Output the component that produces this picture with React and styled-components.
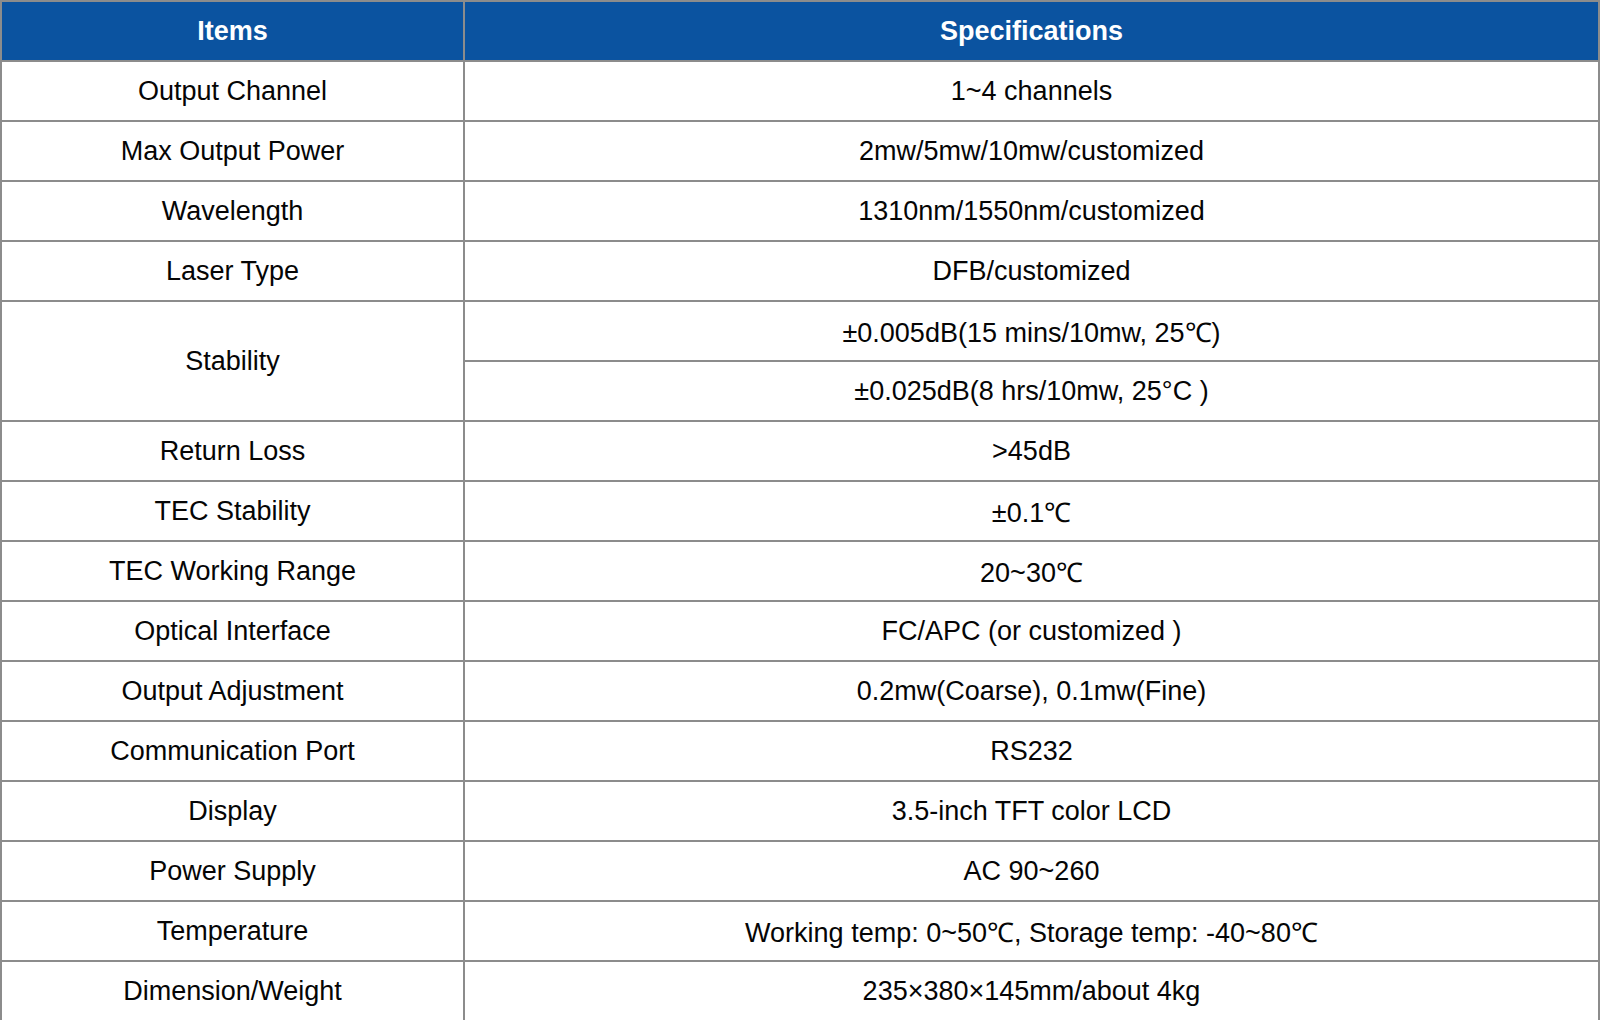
import React from 'react';
import styled, { createGlobalStyle } from 'styled-components';

const GlobalStyle = createGlobalStyle`
    html, body {
        margin: 0;
        padding: 0;
        background: #ffffff;
    }
    body {
        font-family: "Liberation Sans", Arial, sans-serif;
    }
`;

const SpecTable = styled.table`
    width: 1600px;
    border-collapse: collapse;
    table-layout: fixed;
    color: #050505;
`;

const HeadCell = styled.th`
    height: 58px;
    padding: 0;
    background: #0b53a0;
    color: #ffffff;
    font-size: 27px;
    font-weight: bold;
    text-align: center;
    border: 2px solid #8c8c8c;
`;

const Cell = styled.td`
    height: 58px;
    padding: 0;
    font-size: 27px;
    text-align: center;
    vertical-align: middle;
    border: 2px solid #8c8c8c;
`;

const rows = [
    ['Output Channel', '1~4 channels'],
    ['Max Output Power', '2mw/5mw/10mw/customized'],
    ['Wavelength', '1310nm/1550nm/customized'],
    ['Laser Type', 'DFB/customized'],
    ['Stability', ['±0.005dB(15 mins/10mw, 25℃)', '±0.025dB(8 hrs/10mw, 25°C )']],
    ['Return Loss', '>45dB'],
    ['TEC Stability', '±0.1℃'],
    ['TEC Working Range', '20~30℃'],
    ['Optical Interface', 'FC/APC (or customized )'],
    ['Output Adjustment', '0.2mw(Coarse), 0.1mw(Fine)'],
    ['Communication Port', 'RS232'],
    ['Display', '3.5-inch TFT color LCD'],
    ['Power Supply', 'AC 90~260'],
    ['Temperature', 'Working temp: 0~50℃, Storage temp: -40~80℃'],
    ['Dimension/Weight', '235×380×145mm/about 4kg'],
];

export default function App() {
    return (
        <>
            <GlobalStyle />
            <SpecTable>
                <colgroup>
                    <col style={{ width: '463px' }} />
                    <col />
                </colgroup>
                <thead>
                    <tr>
                        <HeadCell>Items</HeadCell>
                        <HeadCell>Specifications</HeadCell>
                    </tr>
                </thead>
                <tbody>
                    {rows.map(([item, spec]) => {
                        if (Array.isArray(spec)) {
                            return spec.map((s, i) => (
                                <tr key={item + i}>
                                    {i === 0 && <Cell rowSpan={spec.length}>{item}</Cell>}
                                    <Cell>{s}</Cell>
                                </tr>
                            ));
                        }
                        return (
                            <tr key={item}>
                                <Cell>{item}</Cell>
                                <Cell>{spec}</Cell>
                            </tr>
                        );
                    })}
                </tbody>
            </SpecTable>
        </>
    );
}
